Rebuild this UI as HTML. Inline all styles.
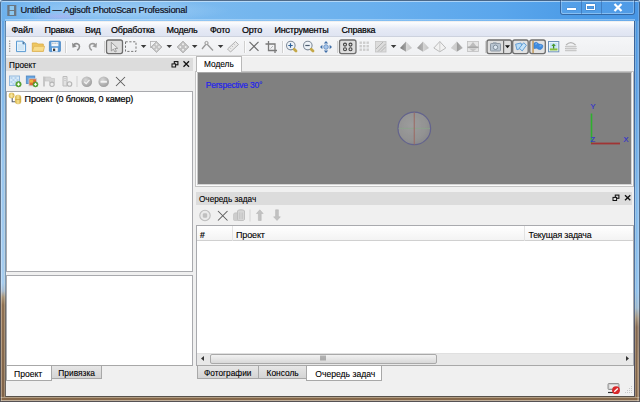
<!DOCTYPE html>
<html><head><meta charset="utf-8">
<style>
*{margin:0;padding:0;box-sizing:border-box}
html,body{width:640px;height:402px;overflow:hidden;background:#dde6ee}
body{position:relative;font-family:"Liberation Sans",sans-serif;color:#000}
.a{position:absolute}
.t{position:absolute;white-space:nowrap;line-height:1;-webkit-text-stroke:0.2px currentColor}
#frame{left:0;top:0;width:640px;height:402px;border-radius:3px 3px 0 0;overflow:hidden;
 background:linear-gradient(90deg,#a9cdf0 0%,#8fc0ee 30%,#7fb6ec 55%,#6aaae8 80%,#4f9ae4 100%)}
#client{left:6px;top:21px;width:628px;height:375px;background:#f0f0f0}
</style></head><body>
<div id="frame" class="a">
  <div class="a" style="left:0;top:0;width:640px;height:21px;background:linear-gradient(90deg,#6cb0ec 0%,#7cbaf0 6%,#80bcf0 25%,#74b6ee 40%,#6ab0ee 58%,#5aa6ec 78%,#4a9ae6 92%,#4896e4 100%)"></div>
  <div class="a" style="left:0;top:1px;width:230px;height:19px;background:radial-gradient(ellipse 50% 60% at 50% 50%,rgba(220,240,255,0.35),rgba(220,240,255,0) 100%)"></div>
  <div class="a" style="left:30px;top:12px;width:60px;height:9px;background:radial-gradient(ellipse at center,rgba(200,170,240,0.45),rgba(200,170,240,0) 70%)"></div>
  <div class="a" style="left:0;top:21px;width:6px;height:381px;background:linear-gradient(180deg,#62a6e8 0px,#7cb6ec 50px,#98c6ef 140px,#a6cdf0 262px,#a8bcd0 270px,#a89478 276px,#8e7052 284px,#7e6248 381px)"></div>
  <div class="a" style="left:634px;top:21px;width:6px;height:381px;background:linear-gradient(180deg,#4a96e2 0px,#5aa0e6 80px,#7ab6ec 170px,#8cc0ee 270px,#9ab8d0 287px,#a0907a 297px,#846850 306px,#7e6248 381px)"></div>
  <div class="a" style="left:0;top:396px;width:640px;height:6px;background:#86684a"></div>
  <!-- lighter middle strips in brown frame -->
  <div class="a" style="left:1px;top:21px;width:1px;height:381px;background:linear-gradient(180deg,rgba(255,255,255,0.25) 0px,rgba(255,255,255,0.2) 267px,rgba(230,200,160,0.35) 282px,rgba(230,200,160,0.35) 381px)"></div>
  <div class="a" style="left:637px;top:21px;width:2px;height:381px;background:linear-gradient(180deg,rgba(255,255,255,0.12) 0px,rgba(255,255,255,0.12) 320px,rgba(230,200,160,0.35) 345px)"></div>
  <div class="a" style="left:4px;top:21px;width:1px;height:376px;background:rgba(240,225,200,0.3)"></div>
  <div class="a" style="left:635px;top:21px;width:1px;height:376px;background:rgba(240,225,200,0.3)"></div>
  <div class="a" style="left:0;top:397px;width:640px;height:1px;background:rgba(235,225,205,0.45)"></div>
  <div class="a" style="left:0;top:400px;width:640px;height:1px;background:rgba(235,225,205,0.45)"></div>
  <div class="a" style="left:0;top:0;width:640px;height:402px;border-radius:3px 3px 0 0;box-shadow:inset 0 0 0 1px rgba(40,50,70,0.6),inset 0 0 0 2px rgba(255,255,255,0.18)"></div>
  <div class="a" style="left:0;top:1px;width:640px;height:1px;background:rgba(230,245,255,0.45)"></div>
  <div class="a" style="left:5px;top:19px;width:630px;height:2px;background:linear-gradient(180deg,rgba(210,235,255,0.55),rgba(210,235,255,0.15))"></div>
  <div class="a" style="left:5px;top:21px;width:630px;height:376px;border:1px solid rgba(60,78,100,0.8);border-bottom-color:rgba(80,78,75,0.85);border-left-color:rgba(80,100,120,0.5);border-right-color:rgba(50,70,110,0.6)"></div>
</div>
<!-- title -->
<svg class="a" style="left:6px;top:4px" width="12" height="13" viewBox="6 4 12 13">
<rect x="7.3" y="5" width="9" height="11" fill="#6a7682"/>
<rect x="9.6" y="6" width="4.4" height="4" fill="#8cc8f0"/>
<rect x="9.6" y="11" width="4.4" height="4" fill="#8cc8f0"/>
</svg>
<div class="t" style="left:20.4px;top:6px;font-size:9.3px;letter-spacing:-0.22px;color:#101020">Untitled — Agisoft PhotoScan Professional</div>
<!-- caption buttons -->
<div class="a" style="left:560px;top:0;width:75px;height:14.5px;border:1px solid rgba(30,60,110,0.55);border-top:none;border-radius:0 0 3px 3px;background:rgba(120,180,240,0.15);box-shadow:inset 0 -1px 0 rgba(200,230,255,0.45),inset 1px 0 0 rgba(200,230,255,0.35),inset -1px 0 0 rgba(200,230,255,0.35)"></div>
<div class="a" style="left:581px;top:0;width:1px;height:14px;background:rgba(40,80,140,0.4)"></div>
<div class="a" style="left:601px;top:0;width:1px;height:14px;background:rgba(40,80,140,0.4)"></div>
<div class="a" style="left:567px;top:7.8px;width:8.5px;height:2.6px;background:#fff;box-shadow:0 0 1px rgba(20,40,80,0.7)"></div>
<div class="a" style="left:586.3px;top:4.2px;width:8.4px;height:6.3px;border:1.6px solid #fff;border-top-width:2.2px;box-shadow:0 0 1px rgba(20,40,80,0.7),inset 0 0 1px rgba(20,40,80,0.7)"></div>
<svg class="a" style="left:613px;top:3px" width="10" height="9" viewBox="0 0 10 9"><path d="M1.5 1L8.5 8M8.5 1L1.5 8" stroke="#fff" stroke-width="2.2"/></svg>


<div id="client" class="a"></div>
<!-- menubar -->
<div class="a" style="left:6px;top:22px;width:628px;height:14px;background:linear-gradient(180deg,#fcfdfe 0%,#f6f8fc 15%,#e6eaf5 50%,#dfe4f2 100%)"></div>
<div class="a" style="left:6px;top:36px;width:628px;height:1px;background:#cdd2de"></div>
<div class="t" style="left:11.4px;top:25.8px;font-size:9px;letter-spacing:-0.18px">Файл</div>
<div class="t" style="left:44.4px;top:25.8px;font-size:9px;letter-spacing:-0.18px">Правка</div>
<div class="t" style="left:84.9px;top:25.8px;font-size:9px;letter-spacing:-0.18px">Вид</div>
<div class="t" style="left:110.9px;top:25.8px;font-size:9px;letter-spacing:-0.18px">Обработка</div>
<div class="t" style="left:166.4px;top:25.8px;font-size:9px;letter-spacing:-0.18px">Модель</div>
<div class="t" style="left:209.9px;top:25.8px;font-size:9px;letter-spacing:-0.18px">Фото</div>
<div class="t" style="left:241.9px;top:25.8px;font-size:9px;letter-spacing:-0.18px">Орто</div>
<div class="t" style="left:274.4px;top:25.8px;font-size:9px;letter-spacing:-0.18px">Инструменты</div>
<div class="t" style="left:341.4px;top:25.8px;font-size:9px;letter-spacing:-0.18px">Справка</div>
<!-- toolbar -->
<div class="a" style="left:6px;top:37px;width:628px;height:18px;background:linear-gradient(180deg,#f5f6f8 0%,#eff0f2 100%)"></div>
<div class="a" style="left:6px;top:55px;width:628px;height:1px;background:#d4d4d4"></div>
<div class="a" style="left:6px;top:56px;width:628px;height:1px;background:#fafafa"></div>
<svg class="a" style="left:0;top:0" width="640" height="60" viewBox="0 0 640 60">
<defs>
<linearGradient id="pb" x1="0" y1="0" x2="0" y2="1"><stop offset="0" stop-color="#dcdcdc"/><stop offset="1" stop-color="#e6e6e6"/></linearGradient>
<linearGradient id="pyr" x1="0" y1="0" x2="1" y2="0"><stop offset="0" stop-color="#7a7a7a"/><stop offset="0.5" stop-color="#9a9a9a"/><stop offset="0.5" stop-color="#cfcfcf"/><stop offset="1" stop-color="#e2e2e2"/></linearGradient>
<linearGradient id="pyr2" x1="0" y1="0" x2="1" y2="0"><stop offset="0" stop-color="#9a9a9a"/><stop offset="0.5" stop-color="#b0b0b0"/><stop offset="0.5" stop-color="#d5d5d5"/><stop offset="1" stop-color="#e8e8e8"/></linearGradient>
</defs>
<!-- grip -->
<g fill="#9a9a9a"><rect x="9" y="40.5" width="1.3" height="1.3"/><rect x="9" y="43" width="1.3" height="1.3"/><rect x="9" y="45.5" width="1.3" height="1.3"/><rect x="9" y="48" width="1.3" height="1.3"/><rect x="9" y="50.5" width="1.3" height="1.3"/></g>
<!-- new doc -->
<path d="M16.5 41.2H23L25.6 43.8V51.6H16.5Z" fill="#e4f2fb" stroke="#5b9bd2" stroke-width="1"/>
<path d="M18 45H24M18 47H24M18 49H24" stroke="#b5d6ee" stroke-width="0.8"/>
<path d="M22.8 41.5V44H25.3" fill="none" stroke="#5b9bd2" stroke-width="0.8"/>
<circle cx="23.6" cy="43" r="0.8" fill="#2f4f70"/>
<!-- folder -->
<path d="M32.3 43H36.8L37.8 44H43.3V51.3H32.3Z" fill="#efc760" stroke="#d9ac48" stroke-width="0.8"/>
<path d="M34 46.3H44.6L43.4 51.3H32.3Z" fill="#f8dc8a" stroke="#dcb050" stroke-width="0.7"/>
<!-- save -->
<rect x="49.4" y="41.2" width="11" height="10.4" rx="0.8" fill="#5a9ad6" stroke="#3f80c2" stroke-width="0.8"/>
<rect x="51.4" y="42" width="7" height="4.2" fill="#f2f6fa"/>
<path d="M52.3 43.2H53.5M54.5 43.2H55.7M56.7 43.2H57.5" stroke="#7a8a9a" stroke-width="0.9"/>
<rect x="52" y="47.8" width="5.8" height="3.8" fill="#f4f7fa"/>
<rect x="53" y="48.6" width="2.2" height="2.4" fill="#3a3a3a"/>
<!-- separators -->
<g fill="#d0d0d0"><rect x="65" y="41" width="1" height="12"/><rect x="104" y="41" width="1" height="12"/><rect x="244" y="41" width="1" height="12"/><rect x="282" y="41" width="1" height="12"/><rect x="337" y="41" width="1" height="12"/><rect x="485" y="41" width="1" height="12"/></g>
<g fill="#fcfcfc"><rect x="66" y="41" width="1" height="12"/><rect x="105" y="41" width="1" height="12"/><rect x="245" y="41" width="1" height="12"/><rect x="283" y="41" width="1" height="12"/><rect x="338" y="41" width="1" height="12"/><rect x="486" y="41" width="1" height="12"/></g>
<!-- undo / redo -->
<path d="M73.5 44.8C76 42.8 79.5 43.5 79.5 46.5C79.5 48.5 78.3 49.5 77.2 50.3" fill="none" stroke="#8c8c8c" stroke-width="1.6"/>
<path d="M72 42.8L72.5 47.8L76.8 46.5Z" fill="#8c8c8c"/>
<path d="M95.5 44.8C93 42.8 89.5 43.5 89.5 46.5C89.5 48.5 90.7 49.5 91.8 50.3" fill="none" stroke="#9a9a9a" stroke-width="1.6"/>
<path d="M97 42.8L96.5 47.8L92.2 46.5Z" fill="#9a9a9a"/>
<!-- pressed select btn -->
<rect x="106.5" y="40" width="16" height="13.6" rx="2" fill="#dedede" stroke="#6e6e6e" stroke-width="1.3"/>
<path d="M111.3 42.3V51L113.3 49.2L115 52L116.4 51.3L114.8 48.6L117.7 48.3Z" fill="#e9e9e9" stroke="#8a8a8a" stroke-width="0.8"/>
<!-- dashed rect -->
<rect x="125.5" y="41.8" width="10.5" height="9.6" fill="none" stroke="#777" stroke-width="1" stroke-dasharray="2.2 1.6"/>
<!-- dropdown arrows -->
<g fill="#3a3a3a"><path d="M140.8 45H146.4L143.6 48Z"/><path d="M166.5 45H172.1L169.3 48Z"/><path d="M191.9 45H197.5L194.7 48Z"/><path d="M217.8 45H223.4L220.6 48Z"/><path d="M390.8 45H396.4L393.6 48Z"/></g>
<!-- move region icon -->
<rect x="150.5" y="41.5" width="6" height="6" fill="none" stroke="#b0b0b0" stroke-width="0.8"/>
<path d="M156.5 41.5L162 47L156.5 52.5L151 47Z" fill="#c4c4c4" stroke="#a8a8a8" stroke-width="0.7"/>
<g fill="#eee"><circle cx="156.5" cy="44.5" r="0.9"/><circle cx="154" cy="47" r="0.9"/><circle cx="159" cy="47" r="0.9"/><circle cx="156.5" cy="49.5" r="0.9"/></g>
<!-- diamond -->
<path d="M183 41L189 47L183 53L177 47Z" fill="#c0c0c0" stroke="#aaa" stroke-width="0.7"/>
<g fill="#f0f0f0"><circle cx="183" cy="44.3" r="1"/><circle cx="180.3" cy="47" r="1"/><circle cx="185.7" cy="47" r="1"/><circle cx="183" cy="49.7" r="1"/></g>
<!-- angle -->
<path d="M202 49L206.5 43.5L213 50.5" fill="none" stroke="#999" stroke-width="1.3"/>
<circle cx="206.5" cy="43" r="1.6" fill="#f0f0f0" stroke="#999" stroke-width="1"/>
<!-- ruler -->
<path d="M227.5 49L235.5 41.5L238.5 44.5L230.5 52Z" fill="#eaeaea" stroke="#aaa" stroke-width="0.9"/>
<path d="M230 47.8L231 48.8M232 46L233 47M234 44.2L235 45.2" stroke="#aaa" stroke-width="0.7"/>
<!-- X -->
<path d="M249.5 41.8L258.5 50.8M258.5 41.8L249.5 50.8" stroke="#6e6e6e" stroke-width="1.2"/>
<!-- crop -->
<path d="M268.5 41V50.5H277M265.5 44H275V53" fill="none" stroke="#7a7a7a" stroke-width="1.3"/>
<path d="M270.5 48.5L273 46" stroke="#9a9a9a" stroke-width="0.7"/>
<!-- zoom in/out -->
<circle cx="290.8" cy="45.6" r="4.3" fill="#eef3f8" stroke="#808c9a" stroke-width="1.1"/>
<path d="M288.3 45.5H292.7M290.5 43.3V47.7" stroke="#2e5f96" stroke-width="1.2"/>
<path d="M294.2 49.2L296 51" stroke="#c4a848" stroke-width="2.8" stroke-linecap="round"/>
<circle cx="307.8" cy="45.6" r="4.3" fill="#eef3f8" stroke="#808c9a" stroke-width="1.1"/>
<path d="M305.3 45.5H309.7" stroke="#4a5a6e" stroke-width="1.2"/>
<path d="M311.2 49.2L313 51" stroke="#c4a848" stroke-width="2.8" stroke-linecap="round"/>
<!-- move arrows -->
<g fill="#3f6ea8"><path d="M326 41L328.2 43.4H323.8Z"/><path d="M326 53L328.2 50.6H323.8Z"/><path d="M320 47L322.4 44.8V49.2Z"/><path d="M332 47L329.6 44.8V49.2Z"/></g>
<circle cx="326" cy="47" r="2.3" fill="#a8c6ea" stroke="#5c88c0" stroke-width="0.8"/>
<!-- pressed points btn -->
<rect x="339.5" y="40" width="16.5" height="13.6" rx="2" fill="#dedede" stroke="#6e6e6e" stroke-width="1.3"/>
<g fill="none" stroke="#444" stroke-width="1.1"><circle cx="345" cy="44.6" r="1.5"/><circle cx="350.5" cy="44.6" r="1.5"/><circle cx="345" cy="49.2" r="1.5"/><circle cx="350.5" cy="49.2" r="1.5"/></g>
<!-- dense grid -->
<g fill="#cdcdcd"><rect x="359.5" y="41.5" width="2.4" height="2.4"/><rect x="363" y="41.5" width="2.4" height="2.4"/><rect x="366.5" y="41.5" width="2.4" height="2.4"/><rect x="359.5" y="45" width="2.4" height="2.4"/><rect x="363" y="45" width="2.4" height="2.4"/><rect x="366.5" y="45" width="2.4" height="2.4"/><rect x="359.5" y="48.5" width="2.4" height="2.4"/><rect x="363" y="48.5" width="2.4" height="2.4"/><rect x="366.5" y="48.5" width="2.4" height="2.4"/></g>
<!-- hatched -->
<rect x="375.5" y="41.5" width="10.5" height="10.5" fill="#dcdcdc" stroke="#c4c4c4" stroke-width="0.8"/>
<path d="M376 49L383 42M378 51.5L385.5 44M381 51.5L385.5 47" stroke="#b5b5b5" stroke-width="1"/>
<!-- pyramids -->
<linearGradient id="pl1" x1="0" y1="0" x2="1" y2="0"><stop offset="0" stop-color="#767676"/><stop offset="1" stop-color="#a6a6a6"/></linearGradient>
<linearGradient id="pr1" x1="0" y1="0" x2="1" y2="0"><stop offset="0" stop-color="#dadada"/><stop offset="1" stop-color="#c6c6c6"/></linearGradient>
<linearGradient id="pl2" x1="0" y1="0" x2="1" y2="0"><stop offset="0" stop-color="#9a9a9a"/><stop offset="1" stop-color="#b4b4b4"/></linearGradient>
<linearGradient id="pr2" x1="0" y1="0" x2="1" y2="0"><stop offset="0" stop-color="#d6d6d6"/><stop offset="1" stop-color="#c2c2c2"/></linearGradient>
<path d="M406 41.5L400 48L406 51.8Z" fill="url(#pl1)"/>
<path d="M406 41.5L412 48L406 51.8Z" fill="url(#pr1)"/>
<path d="M423 41.5L417 48L423 51.8Z" fill="url(#pl2)"/>
<path d="M423 41.5L429 48L423 51.8Z" fill="url(#pr2)"/>
<path d="M439.8 41.5L433.8 48L439.8 51.8L445.8 48Z" fill="#f2f2f2" stroke="#b4b4b4" stroke-width="0.9"/>
<path d="M439.8 41.5V51.8" stroke="#c4c4c4" stroke-width="0.8"/>
<path d="M456.8 41.5L450.8 48L456.8 51.8Z" fill="#cfcfcf"/>
<path d="M456.8 41.5L462.8 48L456.8 51.8Z" fill="url(#pl2)"/>
<!-- grid pyramid icon -->
<rect x="467.5" y="41.5" width="11" height="10" fill="#e6e6e6" stroke="#c0c0c0" stroke-width="0.8"/>
<path d="M473 42L469 47H477Z" fill="#bdbdbd"/>
<rect x="467.5" y="46.5" width="11" height="1.6" fill="#a8a8a8"/>
<path d="M469 48.5L473 51.5L477 48.5" fill="#c4c4c4"/>
<!-- camera pressed btn -->
<rect x="487" y="40" width="24.5" height="13.6" rx="2" fill="#dedede" stroke="#6e6e6e" stroke-width="1.3"/>
<rect x="503" y="40.6" width="1.2" height="12.4" fill="#6e6e6e"/>
<rect x="490.5" y="43.5" width="10" height="7.5" rx="0.8" fill="#b8c4d0" stroke="#7f8c98" stroke-width="0.8"/>
<rect x="493" y="42.2" width="3.5" height="1.6" fill="#9aa6b2"/>
<circle cx="495.5" cy="47.3" r="2.2" fill="#dce6f0" stroke="#6f7d8a" stroke-width="0.8"/>
<path d="M505 45.3H510L507.5 48.3Z" fill="#111"/>
<!-- pressed btn 2 -->
<rect x="512.7" y="40" width="15.5" height="13.6" rx="2" fill="#e2e2e2" stroke="#6e6e6e" stroke-width="1.3"/>
<path d="M515.6 44.2L521 43L522.3 47.6L517 49.8Z" fill="#b9dcf6" stroke="#5a98d4" stroke-width="0.9"/>
<path d="M519.3 48.2L523.6 42.8L526.4 45.2L522.2 51Z" fill="#c6e4fa" stroke="#5a98d4" stroke-width="0.9"/>
<!-- pressed btn 3 flag -->
<rect x="529.8" y="40" width="15.5" height="13.6" rx="2" fill="#e2e2e2" stroke="#6e6e6e" stroke-width="1.3"/>
<rect x="532.3" y="40.8" width="1.5" height="12.2" fill="#c49a5a"/>
<path d="M534 43.2C535.5 41.8 537.5 42.2 538.3 43.8C539.5 44.5 541.5 44 542.8 45.3C543.2 47.2 542 49.6 539.8 49.6C538.2 49.6 537.5 48.2 536.5 48.2L534 48.6Z" fill="#3f8ce0" stroke="#2f70c0" stroke-width="0.5"/>
<path d="M535.3 44.2L537 43.6M539.5 46L541.5 45.8" stroke="#9cc8f4" stroke-width="0.8"/>
<!-- image icon -->
<rect x="548.5" y="41.5" width="10.3" height="10.3" fill="#f4f8fb" stroke="#6f93b8" stroke-width="1"/>
<rect x="549.8" y="42.8" width="7.7" height="5.6" fill="#c4e4f6"/>
<path d="M549.8 48.4H557.5V50.5H549.8Z" fill="#86c040"/>
<path d="M553.6 44V48.6" stroke="#3c8a28" stroke-width="1.3"/>
<path d="M551.4 46L553.6 43.6L555.8 46Z" fill="#4c9a30"/>
<!-- stack icon -->
<path d="M566 45Q570.8 40.2 575.6 45" fill="none" stroke="#b4b4b4" stroke-width="1.1"/>
<g fill="none" stroke="#b4b4b4" stroke-width="1.1"><path d="M565.2 46.6H576.4"/><path d="M565 48.6H576.6"/><path d="M565.2 50.6H576.4"/></g>
<rect x="565.5" y="45.2" width="10.6" height="6" fill="#dadada" opacity="0.5"/>
</svg>

<!-- left dock: project -->
<div class="a" style="left:6px;top:57.5px;width:187px;height:13px;background:#dcdcdc"></div>
<div class="t" style="left:9px;top:61.7px;font-size:8.2px;-webkit-text-stroke:0.1px #000">Проект</div>


<div class="a" style="left:6px;top:91px;width:187px;height:181px;background:#fff;border:1px solid #a9aaae"></div>
<div class="t" style="left:24.6px;top:94.6px;font-size:9px;letter-spacing:-0.15px">Проект (0 блоков, 0 камер)</div>
<div class="a" style="left:6px;top:275px;width:187px;height:91px;background:#fff;border:1px solid #a9aaae"></div>
<!-- left tabs -->
<div class="a" style="left:51px;top:365px;width:51px;height:14px;background:linear-gradient(180deg,#e8e8e8,#d4d4d4);border:1px solid #a8a8a8;border-top:none"></div>
<div class="t" style="left:58.3px;top:369px;font-size:8.4px;-webkit-text-stroke:0.1px #000">Привязка</div>
<div class="a" style="left:6px;top:365px;width:46px;height:16px;background:#fff;border:1px solid #a8a8a8;border-top:none"></div>
<div class="t" style="left:14px;top:369.5px;font-size:8.6px;-webkit-text-stroke:0.1px #000">Проект</div>
<div class="a" style="left:6px;top:365px;width:187px;height:1px;background:#a8a8a8"></div>
<!-- model tab -->
<div class="a" style="left:195px;top:71px;width:439px;height:1px;background:#c4c4c4"></div>
<div class="a" style="left:196px;top:56px;width:46px;height:16px;background:#fff;border:1px solid #b8b8b8;border-bottom:none"></div>
<div class="t" style="left:204px;top:60.2px;font-size:8.3px;-webkit-text-stroke:0.1px #000">Модель</div>
<div class="a" style="left:195px;top:72px;width:439px;height:115px;background:#fbfbfb;border:1px solid #c4c4c4;border-top:none;border-right-color:#b8b8b8"></div>
<div class="a" style="left:197px;top:72px;width:435px;height:112.5px;background:#808080;border:1px solid #d4d4d4;border-left-color:#c8c8c8;border-top-color:#a8a8a8"></div>
<div class="t" style="left:205.8px;top:80.8px;font-size:8.5px;letter-spacing:-0.22px;color:#2424ea">Perspective 30°</div>
<svg class="a" style="left:380px;top:95px" width="260" height="60" viewBox="380 95 260 60">
<defs><radialGradient id="sph" cx="0.42" cy="0.4" r="0.65"><stop offset="0" stop-color="#a4a4a4"/><stop offset="0.7" stop-color="#979797"/><stop offset="1" stop-color="#8a8a8e"/></radialGradient></defs>
<circle cx="414.3" cy="128.4" r="16.3" fill="url(#sph)" stroke="#5c5c90" stroke-width="1.2" opacity="0.8"/>
<path d="M398.5 128.4H430" stroke="#88a888" stroke-width="1" opacity="0.6"/>
<path d="M414.3 112.5V144.5" stroke="#9c6a64" stroke-width="1.2" opacity="0.85"/>
<path d="M591.5 113.5V143" stroke="#2eb02e" stroke-width="1.6"/>
<path d="M591 143.5H620" stroke="#a03434" stroke-width="1.8"/>
</svg>
<div class="t" style="left:590.5px;top:102.5px;font-size:7.5px;color:#3333cc">Y</div>
<div class="t" style="left:590.5px;top:135.5px;font-size:7.5px;color:#3333cc">Z</div>
<div class="t" style="left:623.5px;top:135.5px;font-size:7.5px;color:#3333cc">X</div>
<!-- task queue dock -->
<div class="a" style="left:196px;top:191.5px;width:436px;height:13px;background:#dcdcdc"></div>
<div class="t" style="left:199px;top:196.2px;font-size:8.2px;-webkit-text-stroke:0.1px #000">Очередь задач</div>
<div class="a" style="left:196px;top:225px;width:438px;height:141px;background:#fff;border:1px solid #a9aaae"></div>
<div class="a" style="left:197px;top:226px;width:436px;height:15px;background:linear-gradient(180deg,#ffffff,#f3f3f3);border-bottom:1px solid #d0d0d0"></div>
<div class="a" style="left:232px;top:226px;width:1px;height:15px;background:#e3e3e3"></div>
<div class="a" style="left:524px;top:226px;width:1px;height:15px;background:#e3e3e3"></div>
<div class="t" style="left:200px;top:230.6px;font-size:8.6px">#</div>
<div class="t" style="left:236px;top:230.8px;font-size:9px;letter-spacing:-0.15px;-webkit-text-stroke:0.1px #000">Проект</div>
<div class="t" style="left:528.5px;top:230.8px;font-size:8.8px;letter-spacing:-0.2px;-webkit-text-stroke:0.1px #000">Текущая задача</div>
<!-- scrollbar -->
<div class="a" style="left:197px;top:353px;width:436px;height:12px;background:#e8e8e8;border-top:1px solid #e0e0e0"></div>
<div class="a" style="left:209.5px;top:353.5px;width:227.5px;height:10.5px;background:linear-gradient(180deg,#f2f2f2,#d8d8d8);border:1px solid #a9a9a9;border-radius:2px"></div>
<!-- right tabs -->
<div class="a" style="left:197px;top:365px;width:62px;height:14px;background:linear-gradient(180deg,#e8e8e8,#d4d4d4);border:1px solid #a8a8a8;border-top:none"></div>
<div class="t" style="left:204px;top:369px;font-size:8.3px;-webkit-text-stroke:0.1px #000">Фотографии</div>
<div class="a" style="left:258px;top:365px;width:49px;height:14px;background:linear-gradient(180deg,#e8e8e8,#d4d4d4);border:1px solid #a8a8a8;border-top:none"></div>
<div class="t" style="left:266.5px;top:369px;font-size:8.4px;-webkit-text-stroke:0.1px #000">Консоль</div>
<div class="a" style="left:306px;top:365px;width:76px;height:16px;background:#fff;border:1px solid #a8a8a8;border-top:none"></div>
<div class="t" style="left:315.3px;top:369.8px;font-size:8.6px;-webkit-text-stroke:0.1px #000">Очередь задач</div>
<div class="a" style="left:196px;top:365px;width:438px;height:1px;background:#a8a8a8"></div>

<svg class="a" style="left:0;top:56px" width="640" height="200" viewBox="0 56 640 200">
<defs>
<radialGradient id="gc" cx="0.4" cy="0.35" r="0.7"><stop offset="0" stop-color="#d8d8d8"/><stop offset="1" stop-color="#9c9c9c"/></radialGradient>
<linearGradient id="cyl" x1="0" y1="0" x2="1" y2="0"><stop offset="0" stop-color="#d9b640"/><stop offset="0.5" stop-color="#f8e49a"/><stop offset="1" stop-color="#caa030"/></linearGradient>
</defs>
<!-- float/close left dock -->
<g fill="none" stroke="#111" stroke-width="1"><rect x="174.3" y="61.6" width="3.6" height="3.2" stroke-width="1.1"/><rect x="172" y="63.9" width="3.6" height="3.1" fill="#dcdcdc"/></g>
<path d="M183.5 61.3L189 66.8M189 61.3L183.5 66.8" stroke="#111" stroke-width="1.3"/>
<!-- float/close task dock -->
<g fill="none" stroke="#111" stroke-width="1"><rect x="615.3" y="195.1" width="3.6" height="3.2" stroke-width="1.1"/><rect x="613" y="197.4" width="3.6" height="3.1" fill="#dcdcdc"/></g>
<path d="M625 195.2L630.3 200.3M630.3 195.2L625 200.3" stroke="#111" stroke-width="1.3"/>
<!-- dock toolbar icons -->
<rect x="9.5" y="76" width="10" height="9.5" fill="#d8eaf8" stroke="#8cb4dc" stroke-width="0.9"/>
<g fill="#b4d2ee"><rect x="10.5" y="77" width="2" height="2"/><rect x="14.5" y="77" width="2" height="2"/><rect x="12.5" y="79" width="2" height="2"/><rect x="16.5" y="79" width="2" height="2"/><rect x="10.5" y="81" width="2" height="2"/><rect x="14.5" y="81" width="2" height="2"/><rect x="12.5" y="83" width="2" height="2"/></g>
<circle cx="18.5" cy="84.2" r="2.7" fill="#62ae3a" stroke="#3f8a22" stroke-width="0.6"/>
<path d="M17 84.2H20M18.5 82.7V85.7" stroke="#fff" stroke-width="1"/>
<rect x="26.3" y="76" width="8.5" height="7.5" fill="#6aa6e0" stroke="#4f86c0" stroke-width="0.8"/>
<rect x="29" y="78.8" width="7.6" height="7" fill="#e06a34" stroke="#c8ccd4" stroke-width="0.9"/>
<rect x="30" y="79.8" width="3.2" height="2.8" fill="#f0b838"/>
<circle cx="35.5" cy="84.4" r="2.5" fill="#62ae3a" stroke="#3f8a22" stroke-width="0.6"/>
<path d="M34.1 84.4H36.9M35.5 83V85.8" stroke="#fff" stroke-width="0.9"/>
<path d="M44 86.5V76.5" stroke="#bdbdbd" stroke-width="1.6"/>
<path d="M45 77H50.5L51.5 78.5H54.5V82.5H49.5V81H45Z" fill="#d4d4d4" stroke="#c0c0c0" stroke-width="0.6"/>
<circle cx="52" cy="84.3" r="2.2" fill="#eee" stroke="#b5b5b5" stroke-width="1.1"/>
<path d="M63 86V76.5H67V86Z" fill="#e2e2e2" stroke="#bcbcbc" stroke-width="1"/>
<path d="M64 78.5H66M64 80.5H66" stroke="#c8c8c8" stroke-width="0.8"/>
<circle cx="69.5" cy="84" r="2.3" fill="#eee" stroke="#b5b5b5" stroke-width="1.1"/>
<rect x="76.5" y="76" width="1" height="11" fill="#d0d0d0"/>
<circle cx="86.8" cy="81.7" r="5.3" fill="url(#gc)"/>
<path d="M84.2 81.8L86.2 83.7L89.5 79.8" fill="none" stroke="#f4f4f4" stroke-width="1.2"/>
<circle cx="103.7" cy="81.7" r="5.3" fill="url(#gc)"/>
<rect x="100.5" y="80.8" width="6.4" height="1.9" fill="#f4f4f4"/>
<path d="M116 77L125 86M125 77L116 86" stroke="#5e5e5e" stroke-width="1.05"/>
<!-- tree icon -->
<path d="M12.2 98V101.7H15.5" fill="none" stroke="#5a6070" stroke-width="1.1"/>
<rect x="9" y="93" width="5.2" height="5" rx="2" fill="url(#cyl)" stroke="#d2ac40" stroke-width="0.5"/>
<path d="M9.6 95.6Q11.6 96.8 13.6 95.6" stroke="#f6e8a8" stroke-width="0.8" fill="none"/>
<rect x="15.3" y="95.2" width="5.6" height="8.6" rx="2" fill="url(#cyl)" stroke="#d2ac40" stroke-width="0.5"/>
<path d="M15.5 99.5H20.7" stroke="#c89a30" stroke-width="0.6"/>
<!-- task dock toolbar -->
<circle cx="205" cy="215.5" r="5.2" fill="#eaeaea" stroke="#bdbdbd" stroke-width="1.1"/>
<rect x="202.8" y="213.3" width="4.4" height="4.4" rx="1.3" fill="#c0c0c0"/>
<path d="M218 211L227.5 220.5M227.5 211L218 220.5" stroke="#5a5a5a" stroke-width="1.05"/>
<path d="M233.5 214.5Q233.5 212.8 235.5 212.8H238.5V220.5H234.5Q233.5 220.5 233.5 219.5Z" fill="#cdcdcd" stroke="#bdbdbd" stroke-width="0.6"/>
<path d="M237.5 211Q237.5 209.8 241 209.8Q244.5 209.8 244.5 211V219.5Q244.5 220.6 241 220.6Q237.5 220.6 237.5 219.5Z" fill="#d6d6d6" stroke="#b8b8b8" stroke-width="0.8"/>
<path d="M239.8 212.5V219M242.2 212.5V219" stroke="#bcbcbc" stroke-width="0.8"/>
<rect x="249.5" y="209.5" width="1" height="12" fill="#d4d4d4"/>
<path d="M259.8 209.8L263.2 213.5H261.2V220.5H258.4V213.5H256.4Z" fill="#c2c2c2" stroke="#b0b0b0" stroke-width="0.5"/>
<path d="M277 220.5L280.4 216.8H278.4V209.8H275.6V216.8H273.6Z" fill="#c2c2c2" stroke="#b0b0b0" stroke-width="0.5"/>
</svg>
<svg class="a" style="left:195px;top:350px" width="445" height="52" viewBox="195 350 445 52">
<path d="M201 358.5L204 356V361Z" fill="#333"/>
<path d="M629 358.5L626 356V361Z" fill="#333"/>
<path d="M321 355.5V360.5M323 355.5V360.5M325 355.5V360.5" stroke="#555" stroke-width="0.8"/>
<!-- status icon -->
<rect x="608" y="383.5" width="11" height="6" rx="1" fill="#cfcfcf" stroke="#7c7c7c" stroke-width="0.8"/>
<rect x="609.5" y="385" width="8" height="3" fill="#eaeaea"/>
<path d="M608 392.5H613" stroke="#333" stroke-width="1.2"/>
<circle cx="616" cy="390.2" r="3.9" fill="#d8282a"/>
<path d="M614.3 391.8L617.8 388.5" stroke="#fff" stroke-width="1.3"/>
<!-- size grip -->
<g fill="#c8c8c8"><rect x="631" y="386" width="1" height="1"/><rect x="629" y="388" width="1" height="1"/><rect x="631" y="388" width="1" height="1"/><rect x="627" y="390" width="1" height="1"/><rect x="629" y="390" width="1" height="1"/><rect x="631" y="390" width="1" height="1"/><rect x="625" y="392" width="1" height="1"/><rect x="627" y="392" width="1" height="1"/><rect x="629" y="392" width="1" height="1"/><rect x="631" y="392" width="1" height="1"/></g>
</svg>
</body></html>
